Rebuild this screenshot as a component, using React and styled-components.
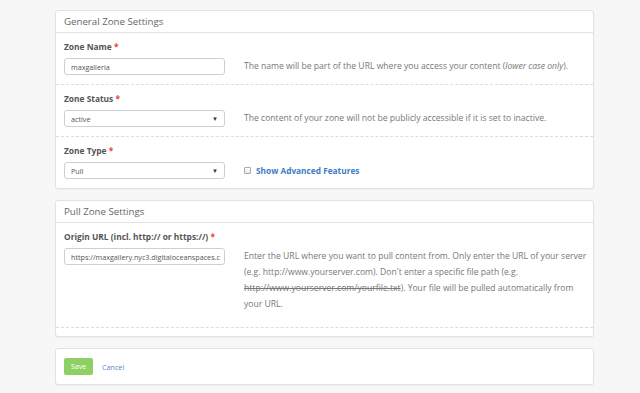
import React from "react";
import styled, { createGlobalStyle } from "styled-components";

const Global = createGlobalStyle`
  html, body { margin: 0; padding: 0; background: #f7f7f7; }
  body { font-family: "Open Sans", "Liberation Sans", sans-serif; color: #555; }
  * { box-sizing: border-box; }
`;

const Page = styled.div`
  width: 640px;
  height: 393px;
  padding: 10px 0 0 55px;
  background: #f7f7f7;
  overflow: hidden;
`;

const Panel = styled.section`
  width: 539px;
  background: #fff;
  border: 1px solid #e2e2e2;
  border-radius: 3px;
  box-shadow: 0 1px 1px rgba(0, 0, 0, 0.04);
  margin-bottom: 11px;
`;

const PanelHeader = styled.div`
  height: 22px;
  padding: 0 8px;
  display: flex;
  align-items: center;
  font-size: 9.7px;
  color: #666;
  border-bottom: 1px solid #e2e2e2;
`;

const Row = styled.div`
  display: grid;
  grid-template-columns: 161px 1fr;
  column-gap: 19px;
  padding: 8px 8px 9px;
  border-bottom: ${(p) => (p.$last ? "none" : "1px dashed #dcdcdc")};
`;

const Field = styled.div`
  display: flex;
  flex-direction: column;
  gap: 5px;
`;

const Label = styled.label`
  font-size: 8.4px;
  line-height: 12px;
  font-weight: 700;
  color: #555;
  white-space: nowrap;
`;

const Star = styled.span`
  color: #e8453c;
`;

const Input = styled.div`
  height: 17px;
  border: 1px solid #cfcfcf;
  border-radius: 3px;
  padding: 0 6px;
  display: flex;
  align-items: center;
  justify-content: space-between;
  font-size: 7.2px;
  color: #555;
  white-space: nowrap;
  overflow: hidden;
  background: #fff;
`;

const Caret = styled.span`
  font-size: 6px;
  color: #333;
`;

const Help = styled.div`
  padding-top: 17px;
  padding-bottom: ${(p) => p.$pb || 0}px;
  font-size: 8.6px;
  line-height: 16px;
  color: #777;
  white-space: nowrap;
`;

const Strike = styled.span`
  text-decoration: line-through;
`;

const CheckWrap = styled.div`
  padding-top: 17px;
  height: 34px;
  display: flex;
  align-items: center;
  gap: 5px;
`;

const Box = styled.span`
  width: 7px;
  height: 7px;
  border: 1px solid #aaa;
  border-radius: 1px;
  background: linear-gradient(#fff, #e6e6e6);
`;

const LinkBold = styled.span`
  font-size: 8.3px;
  font-weight: 700;
  color: #3d7dc4;
`;

const Spacer = styled.div`
  height: 8px;
`;

const Actions = styled.div`
  display: flex;
  align-items: center;
  gap: 9px;
  padding: 9px 8px;
`;

const SaveButton = styled.button`
  width: 29px;
  height: 17px;
  border: none;
  border-radius: 2px;
  background: #8fd064;
  color: #fff;
  font-family: inherit;
  font-size: 7px;
  padding: 0;
`;

const Cancel = styled.span`
  font-size: 7.2px;
  color: #5a86c6;
`;

export default function App() {
  return (
    <>
      <Global />
      <Page>
        <Panel>
          <PanelHeader>General Zone Settings</PanelHeader>
          <Row>
            <Field>
              <Label>
                Zone Name <Star>*</Star>
              </Label>
              <Input>maxgalleria</Input>
            </Field>
            <Help>
              The name will be part of the URL where you access your content (<i>lower case only</i>).
            </Help>
          </Row>
          <Row>
            <Field>
              <Label>
                Zone Status <Star>*</Star>
              </Label>
              <Input>
                active<Caret>▼</Caret>
              </Input>
            </Field>
            <Help>The content of your zone will not be publicly accessible if it is set to inactive.</Help>
          </Row>
          <Row $last>
            <Field>
              <Label>
                Zone Type <Star>*</Star>
              </Label>
              <Input>
                Pull<Caret>▼</Caret>
              </Input>
            </Field>
            <CheckWrap>
              <Box />
              <LinkBold>Show Advanced Features</LinkBold>
            </CheckWrap>
          </Row>
        </Panel>
        <Panel>
          <PanelHeader>Pull Zone Settings</PanelHeader>
          <Row>
            <Field>
              <Label>
                Origin URL (incl. http:// or https://) <Star>*</Star>
              </Label>
              <Input>https://maxgallery.nyc3.digitaloceanspaces.c</Input>
            </Field>
            <Help $pb={6}>
              Enter the URL where you want to pull content from. Only enter the URL of your server
              <br />
              (e.g. http://www.yourserver.com). Don't enter a specific file path (e.g.
              <br />
              <Strike>http://www.yourserver.com/yourfile.txt</Strike>). Your file will be pulled automatically from
              <br />
              your URL.
            </Help>
          </Row>
          <Spacer />
        </Panel>
        <Panel>
          <Actions>
            <SaveButton>Save</SaveButton>
            <Cancel>Cancel</Cancel>
          </Actions>
        </Panel>
      </Page>
    </>
  );
}
